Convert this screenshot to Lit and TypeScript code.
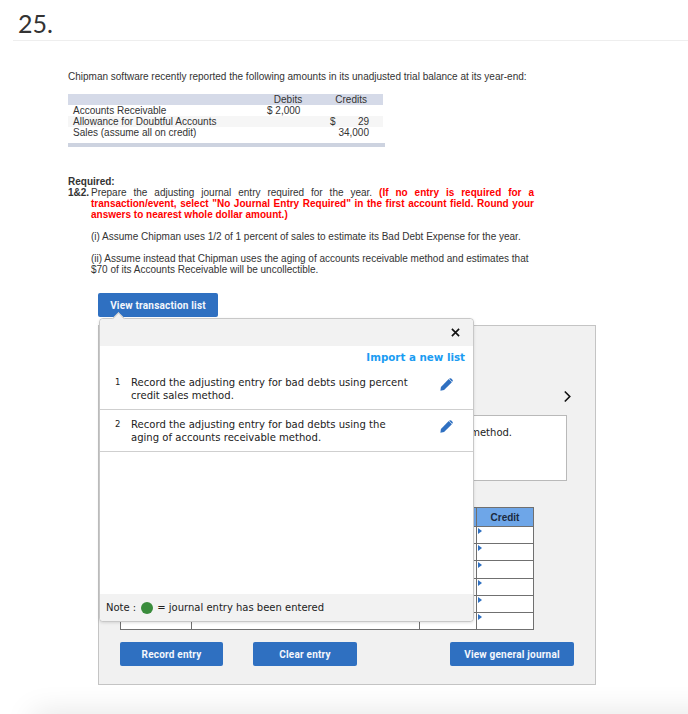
import { LitElement, html, css } from "lit";
import { customElement } from "lit/decorators.js";

const pencil = html`<svg class="pencil" viewBox="0 0 14 14" width="13" height="13">
  <path d="M0.4 13.6 L1 9.6 L9.4 1.2 L12.8 4.6 L4.4 13 Z" fill="#2f70c1"></path>
  <path d="M10.2 0.6 Q11.2 -0.2 12.1 0.6 L13.4 1.9 Q14.2 2.8 13.4 3.7 L13.1 4 L9.8 0.9 Z" fill="#2f70c1"></path>
</svg>`;

const close = html`<svg viewBox="0 0 10 10" width="9" height="9">
  <path d="M1 1 L9 9 M9 1 L1 9" stroke="#111" stroke-width="1.8" fill="none"></path>
</svg>`;

const chevron = html`<svg viewBox="0 0 10 14" width="9" height="13">
  <path d="M2 1.5 L7.5 7 L2 12.5" stroke="#111" stroke-width="1.8" fill="none"></path>
</svg>`;

@customElement("app-root")
export class AppRoot extends LitElement {
  static styles = css`
    :host {
      display: block;
      width: 688px;
      height: 714px;
      overflow: hidden;
      background: #fff;
      font-family: "Liberation Sans", Arial, sans-serif;
      color: #333;
      position: relative;
    }

    .number {
      margin: 0 0 0 13px;
      padding: 7px 0 0 5px;
      box-sizing: border-box;
      border-bottom: 1px solid #eee;
      height: 41px;
      font-family: Lato, sans-serif;
      font-size: 25px;
      line-height: 32px;
      color: #333;
    }

    .question {
      padding: 30px 0 0 68px;
      width: 466px;
      font-size: 10px;
      line-height: 11px;
    }
    .intro {
      margin: 0 0 12px;
      white-space: nowrap;
    }

    .amounts {
      width: 317px;
      border-bottom: 4px solid #cdd3e0;
      padding-bottom: 5px;
      margin-bottom: 29px;
    }
    .amounts .row {
      display: grid;
      grid-template-columns: 194px 41px 61px;
      height: 11px;
      width: 315px;
      padding-left: 5px;
      box-sizing: border-box;
    }
    .amounts .head {
      background: #d5dae8;
    }
    .amounts .alt {
      background: #f6f6f6;
    }
    .amounts .c {
      text-align: center;
      padding-left: 1px;
    }
    .amounts .r {
      text-align: right;
    }
    .amounts .credits {
      padding-right: 2px;
    }
    .amounts .split {
      display: flex;
      justify-content: space-between;
      padding-left: 22px;
    }

    .required {
      font-weight: bold;
      margin: 0;
    }
    .task {
      display: flex;
    }
    .task b {
      width: 23px;
      flex: none;
    }
    .task p {
      margin: 0 0 11px;
      text-align: justify;
    }
    .task .warn {
      color: #f00;
      font-weight: bold;
    }
    .sub {
      margin: 0 0 11px 23px;
    }

    .open-list {
      display: block;
      margin: 18px 0 0 98px;
      width: 120px;
      height: 24px;
    }

    .btn {
      border: 0;
      border-radius: 2px;
      background: #2f70c1;
      color: #f4f7fc;
      font-family: Roboto, sans-serif;
      font-weight: 700;
      font-size: 10px;
      letter-spacing: 0.2px;
      height: 24px;
      padding: 0;
    }

    .stage {
      position: relative;
      margin: 8px 0 0 98px;
      width: 498px;
      height: 360px;
      box-sizing: border-box;
      border: 1px solid #c4c4c4;
      background: #f1f1f1;
      padding: 0 21px 0 21px;
      font-family: "DejaVu Sans", Verdana, sans-serif;
      font-size: 10px;
      color: #222;
    }
    .nav {
      display: flex;
      justify-content: flex-end;
      height: 89px;
      padding: 64px 2px 0 0;
      box-sizing: border-box;
    }
    .brief {
      width: 447px;
      height: 66px;
      box-sizing: border-box;
      border: 1px solid #b9b9b9;
      background: #fff;
      padding: 10px 16px;
      line-height: 13px;
      white-space: nowrap;
      margin-bottom: 26px;
    }
    table {
      border-collapse: collapse;
      table-layout: fixed;
      width: 413px;
      background: #fff;
    }
    th,
    td {
      border: 1px solid #707070;
      height: 16px;
      padding: 0;
      position: relative;
    }
    tr.tall td {
      height: 17px;
    }
    th {
      background: #6ea6e8;
      height: 18px;
      font-family: "Liberation Sans", sans-serif;
      font-size: 10px;
      color: #1b2a40;
    }
    .caret {
      position: absolute;
      left: 1px;
      top: 1px;
      width: 0;
      height: 0;
      border-left: 4px solid #2f70c1;
      border-top: 3px solid transparent;
      border-bottom: 3px solid transparent;
    }
    .actions {
      display: flex;
      margin-top: 12px;
    }
    .actions .record {
      width: 103px;
      margin-right: 30px;
    }
    .actions .clear {
      width: 104px;
      margin-right: 93px;
    }
    .actions .journal {
      width: 124px;
    }

    .modal {
      position: absolute;
      left: 0;
      top: -8px;
      width: 375px;
      height: 304px;
      box-sizing: border-box;
      border: 1px solid #c8c8c8;
      border-radius: 4px;
      background: #fff;
      display: flex;
      flex-direction: column;
      box-shadow: 0 1px 3px rgba(0, 0, 0, 0.12);
    }
    .modal::before {
      content: "";
      position: absolute;
      left: 14px;
      top: -5px;
      width: 8px;
      height: 8px;
      background: #f2f2f2;
      border-left: 1px solid #c8c8c8;
      border-top: 1px solid #c8c8c8;
      transform: rotate(45deg);
    }
    .modal-head {
      height: 27px;
      background: #f2f2f2;
      border-radius: 4px 4px 0 0;
      display: flex;
      justify-content: flex-end;
      align-items: center;
      padding-right: 13px;
    }
    .import {
      text-align: right;
      color: #1b9cf2;
      font-weight: bold;
      font-size: 10.3px;
      line-height: 13px;
      padding: 5px 8px 0 0;
      height: 18px;
      box-sizing: content-box;
      margin-bottom: -1px;
    }
    .entry {
      display: flex;
      height: 42px;
      box-sizing: border-box;
      border-bottom: 1px solid #cfcfcf;
      padding: 8px 20px 0 15px;
      line-height: 13px;
      color: #222;
    }
    .entry .idx {
      width: 16px;
      font-size: 8.5px;
      flex: none;
    }
    .entry .text {
      width: 280px;
      font-size: 10.07px;
    }
    .pencil {
      margin: 2px 0 0 auto;
    }
    .note {
      margin-top: auto;
      height: 27px;
      background: #f2f2f2;
      display: flex;
      align-items: center;
      gap: 4px;
      padding-left: 6px;
      color: #222;
      border-radius: 0 0 4px 4px;
    }
    .dot {
      width: 12px;
      height: 12px;
      margin-left: 1px;
      border-radius: 50%;
      background: #3a8c3c;
    }

    .fade {
      position: absolute;
      left: 33px;
      right: -40px;
      top: 714px;
      height: 20px;
      box-shadow: 0 0 30px rgba(0, 0, 0, 0.13);
    }
  `;

  render() {
    return html`
      <div class="fade"></div>
      <div class="number">25.</div>
      <div class="question">
        <p class="intro">
          Chipman software recently reported the following amounts in its unadjusted trial balance at its year-end:
        </p>
        <div class="amounts">
          <div class="row head"><span></span><span class="c">Debits</span><span class="r credits">Credits</span></div>
          <div class="row"><span>Accounts Receivable</span><span>$ 2,000</span><span></span></div>
          <div class="row alt">
            <span>Allowance for Doubtful Accounts</span><span></span><span class="split"><span>$</span><span>29</span></span>
          </div>
          <div class="row"><span>Sales (assume all on credit)</span><span></span><span class="r">34,000</span></div>
        </div>
        <p class="required">Required:</p>
        <div class="task">
          <b>1&amp;2.</b>
          <p>
            Prepare the adjusting journal entry required for the year.
            <span class="warn">(If no entry is required for a transaction/event, select "No Journal Entry Required" in the first account field. Round your answers to nearest whole dollar amount.)</span>
          </p>
        </div>
        <p class="sub">(i) Assume Chipman uses 1/2 of 1 percent of sales to estimate its Bad Debt Expense for the year.</p>
        <p class="sub">(ii) Assume instead that Chipman uses the aging of accounts receivable method and estimates that $70 of its Accounts Receivable will be uncollectible.</p>
      </div>
      <button class="btn open-list">View transaction list</button>
      <div class="stage">
        <div class="nav">${chevron}</div>
        <div class="brief">Record the adjusting entry using the aging of accounts receivable method.</div>
        <table>
          <colgroup><col style="width:71px" /><col style="width:228px" /><col style="width:57px" /><col style="width:57px" /></colgroup>
          <tr><th>Date</th><th>General Journal</th><th>Debit</th><th>Credit</th></tr>
          ${[0, 1, 2, 3, 4, 5].map(
            (i) => html`<tr class=${i === 2 ? "tall" : ""}><td></td><td></td><td></td><td><span class="caret"></span></td></tr>`
          )}
        </table>
        <div class="actions">
          <button class="btn record">Record entry</button>
          <button class="btn clear">Clear entry</button>
          <button class="btn journal">View general journal</button>
        </div>
        <div class="modal">
          <div class="modal-head">${close}</div>
          <div class="import">Import a new list</div>
          <div class="entry">
            <span class="idx">1</span>
            <span class="text">Record the adjusting entry for bad debts using percent credit sales method.</span>
            ${pencil}
          </div>
          <div class="entry">
            <span class="idx">2</span>
            <span class="text">Record the adjusting entry for bad debts using the aging of accounts receivable method.</span>
            ${pencil}
          </div>
          <div class="note">Note : <span class="dot"></span> = journal entry has been entered</div>
        </div>
      </div>
    `;
  }
}
